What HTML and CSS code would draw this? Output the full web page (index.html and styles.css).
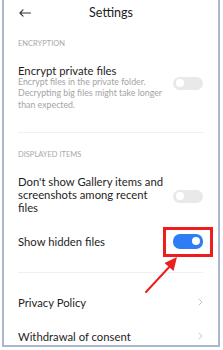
FILE: index.html
```html
<!DOCTYPE html>
<html>
<head>
<meta charset="utf-8">
<link rel="stylesheet" href="styles.css">
</head>
<body>
<div class="frame">
  <header class="topbar">
    <svg class="back" width="12" height="8" viewBox="0 0 12 8"><path d="M11.5 4H1M4 0.8L0.9 4L4 7.2" fill="none" stroke="#333" stroke-width="1.1" stroke-linecap="round" stroke-linejoin="round"/></svg>
    <h1 class="title">Settings</h1>
  </header>

  <div class="section-label label-enc">ENCRYPTION</div>
  <div class="row row-enc">
    <div class="texts">
      <div class="row-title">Encrypt private files</div>
      <div class="row-desc">Encrypt files in the private folder. Decrypting big files might take longer than expected.</div>
    </div>
    <span class="toggle"></span>
  </div>

  <div class="divider div-1"></div>

  <div class="section-label label-disp">DISPLAYED ITEMS</div>
  <div class="row row-gallery">
    <div class="texts">
      <div class="row-title">Don't show Gallery items and screenshots among recent files</div>
    </div>
    <span class="toggle"></span>
  </div>

  <div class="row row-hidden">
    <div class="texts">
      <div class="row-title">Show hidden files</div>
    </div>
    <span class="toggle on"></span>
  </div>

  <div class="divider div-2"></div>

  <div class="row row-privacy">
    <div class="row-title">Privacy Policy</div>
    <svg class="chev" width="5" height="8" viewBox="0 0 5 8"><path d="M1 1L4 4L1 7" fill="none" stroke="#c4c4c4" stroke-width="1" stroke-linecap="round" stroke-linejoin="round"/></svg>
  </div>
  <div class="row row-withdraw">
    <div class="row-title">Withdrawal of consent</div>
    <svg class="chev" width="5" height="8" viewBox="0 0 5 8"><path d="M1 1L4 4L1 7" fill="none" stroke="#c4c4c4" stroke-width="1" stroke-linecap="round" stroke-linejoin="round"/></svg>
  </div>

  <div class="highlight"></div>
  <svg class="arrow" width="40" height="42" viewBox="0 0 40 42"><path d="M3 38L29 10" stroke="#e8211f" stroke-width="2" stroke-linecap="round"/><path d="M34 3L21.5 9L30.5 17Z" fill="#e8211f"/></svg>
</div>
</body>
</html>
```
FILE: styles.css
```css
* { box-sizing: border-box; margin: 0; padding: 0; }
html, body { background: #fff; }
body {
  width: 223px;
  height: 350px;
  overflow: hidden;
  font-family: Lato, "Noto Sans", sans-serif;
  color: #222;
}
.frame {
  position: relative;
  margin-left: 2px;
  width: 218px;
  height: 347px;
  border-left: 2px solid #a9b8cd;
  border-right: 2px solid #a9b8cd;
  border-bottom: 2px solid #a9b8cd;
  background: #fff;
  padding: 0 15px 0 14px;
  display: flex;
  flex-direction: column;
}
.topbar {
  flex: none;
  height: 26px;
  display: flex;
  align-items: center;
  position: relative;
}
.back { margin-left: 1px; }
.title {
  position: absolute;
  left: -14px;
  right: -15px;
  top: 0;
  text-align: center;
  font-size: 12.5px;
  font-weight: 400;
  color: #222;
  line-height: 26px;
}
.section-label {
  font-size: 7.5px;
  color: #a8a8a8;
  line-height: 10px;
}
.label-enc { margin-top: 13px; }
.label-disp { margin-top: 17px; }
.row {
  flex: none;
  display: flex;
  align-items: center;
  justify-content: space-between;
}
.texts { width: 148px; }
.row-title {
  font-size: 11.3px;
  line-height: 13px;
  color: #1e1e1e;
}
.row-desc {
  font-size: 8.8px;
  line-height: 11.75px;
  color: #a4a4a4;
  margin-top: -1.5px;
}
.row-enc { margin-top: 15px; align-items: flex-start; }
.row-enc .toggle { margin-top: 12.5px; }
.toggle {
  flex: none;
  width: 30px;
  height: 13px;
  border-radius: 7px;
  background: #e9e9e9;
  position: relative;
}
.toggle::after {
  content: "";
  position: absolute;
  top: 2.5px;
  left: 3px;
  width: 8px;
  height: 8px;
  border-radius: 50%;
  background: #fff;
}
.toggle.on { background: #2f7df5; height: 15px; }
.toggle.on::after { left: auto; right: 3.5px; top: 3.5px; }
.row-gallery .toggle { margin-top: 4px; }
.divider {
  flex: none;
  height: 1px;
  background: #f0f0f0;
}
.div-1 { margin-top: 21.5px; }
.row-gallery { margin-top: 14.5px; }
.row-hidden { margin-top: 20px; }
.div-2 { margin-top: 23.5px; }
.row-privacy { margin-top: 22.5px; }
.row-withdraw { margin-top: 21px; }
.highlight {
  position: absolute;
  left: 159px;
  top: 227px;
  width: 50px;
  height: 30px;
  border: 3px solid #ee1c1c;
}
.arrow {
  position: absolute;
  left: 139px;
  top: 254px;
}
```
